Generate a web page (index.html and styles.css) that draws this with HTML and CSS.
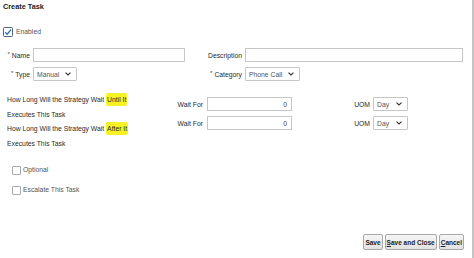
FILE: index.html
```html
<!DOCTYPE html>
<html>
<head>
<meta charset="utf-8">
<link rel="stylesheet" href="styles.css">
</head>
<body>
<div class="page">
  <h1 class="title">Create Task</h1>

  <div class="check-row enabled">
    <span class="cb cb-checked">
      <svg width="10" height="10" viewBox="0 0 10 10"><rect x="0.5" y="0.5" width="9" height="9" rx="1" fill="#fff" stroke="#4a6486"/><path d="M2.2 5.2 L4.2 7.3 L8 2.6" fill="none" stroke="#2f6fbf" stroke-width="1.4"/></svg>
    </span>
    <span class="cb-label">Enabled</span>
  </div>

  <div class="form-grid">
    <label class="lbl"><span class="req">*</span>Name</label>
    <div class="field"></div>
    <label class="lbl">Description</label>
    <div class="field"></div>

    <label class="lbl"><span class="req">*</span>Type</label>
    <div class="select sel-type"><span>Manual</span><svg width="6" height="4" viewBox="0 0 6 4"><path d="M0.5 0.6 L3 3 L5.5 0.6" fill="none" stroke="#333" stroke-width="1.1"/></svg></div>
    <label class="lbl"><span class="req">*</span>Category</label>
    <div class="select sel-cat"><span>Phone Call</span><svg width="6" height="4" viewBox="0 0 6 4"><path d="M0.5 0.6 L3 3 L5.5 0.6" fill="none" stroke="#333" stroke-width="1.1"/></svg></div>
  </div>

  <div class="wait-section">
    <div class="wait-text">
      <p>How Long Will the Strategy Wait <mark>Until It</mark></p>
      <p>Executes This Task</p>
      <p>How Long Will the Strategy Wait <mark>After It</mark></p>
      <p>Executes This Task</p>
    </div>
    <div class="wait-grid">
      <label class="lbl">Wait For</label>
      <div class="field num">0</div>
      <label class="lbl">UOM</label>
      <div class="select sel-uom"><span>Day</span><svg width="6" height="4" viewBox="0 0 6 4"><path d="M0.5 0.6 L3 3 L5.5 0.6" fill="none" stroke="#333" stroke-width="1.1"/></svg></div>

      <label class="lbl">Wait For</label>
      <div class="field num">0</div>
      <label class="lbl">UOM</label>
      <div class="select sel-uom"><span>Day</span><svg width="6" height="4" viewBox="0 0 6 4"><path d="M0.5 0.6 L3 3 L5.5 0.6" fill="none" stroke="#333" stroke-width="1.1"/></svg></div>
    </div>
  </div>

  <div class="options">
    <div class="check-row opt">
      <span class="cb cb-empty"></span>
      <span class="cb-label">Optional</span>
    </div>
    <div class="check-row opt">
      <span class="cb cb-empty"></span>
      <span class="cb-label">Escalate This Task</span>
    </div>
  </div>

  <div class="actions">
    <button class="btn">Save</button>
    <button class="btn"><u>S</u>ave and Close</button>
    <button class="btn"><u>C</u>ancel</button>
  </div>
</div>
</body>
</html>
```

FILE: styles.css
```css
html, body {
  margin: 0;
  padding: 0;
  background: #fff;
}

body {
  font-family: "Liberation Sans", Arial, sans-serif;
  font-size: 6.8px;
  color: #2a2a2a;
}

.page {
  box-sizing: border-box;
  width: 474px;
  height: 258px;
  border-right: 2px solid #c4c4c4;
  display: flex;
  flex-direction: column;
  overflow: hidden;
}

.title {
  margin: 2px 0 0 3px;
  font-size: 7.3px;
  line-height: 10px;
  font-weight: bold;
  color: #222;
}

.check-row {
  display: flex;
  align-items: center;
  gap: 3px;
  height: 12px;
}

.enabled {
  margin: 14px 0 0 3px;
}

.cb {
  display: block;
  width: 10px;
  height: 10px;
  flex: none;
}

.cb svg {
  display: block;
}

.cb-empty {
  box-sizing: border-box;
  width: 9px;
  height: 9px;
  border: 1px solid #a9a9a9;
  border-radius: 1px;
  background: #fff;
}

.cb-label {
  color: #555;
  line-height: 12px;
}

.form-grid {
  margin-top: 10px;
  display: grid;
  grid-template-columns: 30px 152px 54px 218px;
  grid-auto-rows: 14px;
  column-gap: 3px;
  row-gap: 5px;
}

.lbl {
  display: flex;
  align-items: center;
  justify-content: flex-end;
  white-space: nowrap;
  color: #2a2a2a;
}

.req {
  font-size: 6px;
  margin-right: 2px;
  position: relative;
  top: -1px;
  color: #444;
}

.field {
  box-sizing: border-box;
  height: 14px;
  border: 1px solid #c6c6c6;
  background: #fff;
}

.num {
  display: flex;
  align-items: center;
  justify-content: flex-end;
  padding-right: 4px;
  color: #444;
}

.select {
  box-sizing: border-box;
  height: 14px;
  border: 1px solid #c6c6c6;
  border-radius: 1px;
  background: #fff;
  display: flex;
  align-items: center;
  justify-content: space-between;
  padding: 0 5px 0 3px;
  color: #555;
}

.select svg {
  display: block;
}

.sel-type {
  width: 44px;
}

.sel-cat {
  width: 55px;
}

.sel-uom {
  width: 35px;
}

.wait-section {
  margin-top: 12px;
  display: flex;
}

.wait-text {
  box-sizing: border-box;
  width: 177px;
  padding-left: 7px;
}

.wait-text p {
  margin: 0;
  line-height: 14.6px;
  white-space: nowrap;
}

mark {
  background: #f6f224;
  color: #2a2a2a;
  padding: 3px 1px;
  border-radius: 2px;
}

.wait-grid {
  margin-top: 4px;
  display: grid;
  grid-template-columns: 27px 85px 75px 35px;
  grid-auto-rows: 14px;
  column-gap: 3px;
  row-gap: 5px;
  align-self: flex-start;
}

.wait-grid .lbl:nth-child(4n+1) {
  margin-right: 1px;
}

.options {
  margin: 13px 0 0 12px;
  display: flex;
  flex-direction: column;
  gap: 8px;
}

.opt {
  gap: 2px;
}

.actions {
  margin-top: auto;
  margin-bottom: 8px;
  padding-right: 8px;
  display: flex;
  justify-content: flex-end;
  gap: 2px;
}

.btn {
  font-family: "Liberation Sans", Arial, sans-serif;
  font-size: 6.5px;
  font-weight: bold;
  color: #222;
  height: 16px;
  padding: 0 1px;
  margin: 0;
  border: 1px solid #a8a8a8;
  border-radius: 2px;
  background: linear-gradient(#f6f6f6, #e2e2e2);
  white-space: nowrap;
}
```
